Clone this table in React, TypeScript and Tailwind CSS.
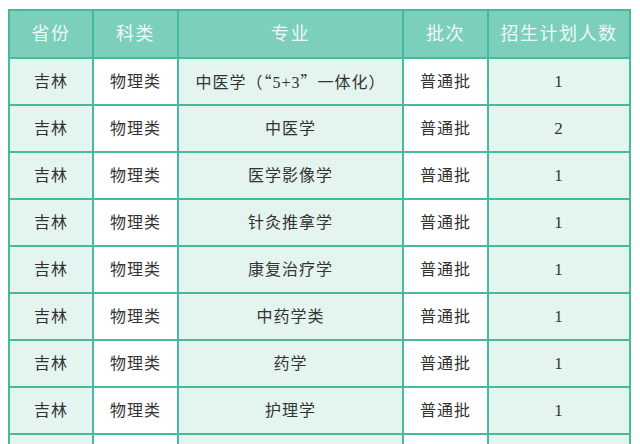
import type { ReactNode } from "react";

const headers = ["省份", "科类", "专业", "批次", "招生计划人数"];

const cjk = { fontFamily: '"Noto Sans CJK SC", sans-serif' };

const rows: ReactNode[][] = [
  [
    "吉林",
    "物理类",
    <>
      中医学（<span style={cjk}>“</span>5+3<span style={cjk}>”</span>一体化）
    </>,
    "普通批",
    "1",
  ],
  ["吉林", "物理类", "中医学", "普通批", "2"],
  ["吉林", "物理类", "医学影像学", "普通批", "1"],
  ["吉林", "物理类", "针灸推拿学", "普通批", "1"],
  ["吉林", "物理类", "康复治疗学", "普通批", "1"],
  ["吉林", "物理类", "中药学类", "普通批", "1"],
  ["吉林", "物理类", "药学", "普通批", "1"],
  ["吉林", "物理类", "护理学", "普通批", "1"],
  // partly visible row at the bottom edge, its text is below the fold
  ["", "", "", "", ""],
];

const widths = ["w-[84px]", "w-[85px]", "w-[225px]", "w-[85px]", "w-[142px]"];
const colBg = ["bg-[#e4f4ee]", "bg-white", "bg-[#e4f4ee]", "bg-white", "bg-[#e4f4ee]"];

export default function App() {
  return (
    <div
      className="w-[640px] h-[444px] overflow-hidden bg-white pt-[9px] pl-[8px]"
      style={{ fontFamily: '"Liberation Serif", "Noto Sans CJK SC", serif' }}
    >
      <table className="border-collapse table-fixed w-[622px]">
        <thead>
          <tr className="h-[48px] bg-[#7ccfba]">
            {headers.map((h, i) => (
              <th
                key={i}
                className={`${widths[i]} border-2 border-[#47b99c] text-center text-[18px] font-normal tracking-[1.5px] text-[#eef9f5]`}
              >
                {h}
              </th>
            ))}
          </tr>
        </thead>
        <tbody>
          {rows.map((r, ri) => (
            <tr key={ri} className="h-[47px]">
              {r.map((c, ci) => (
                <td
                  key={ci}
                  className={`${colBg[ci]} border-2 border-[#47b99c] text-center ${
                    ci === 4 ? "text-[17px]" : "text-[16px]"
                  } tracking-[1px] text-[#333333]`}
                >
                  {c}
                </td>
              ))}
            </tr>
          ))}
        </tbody>
      </table>
    </div>
  );
}
